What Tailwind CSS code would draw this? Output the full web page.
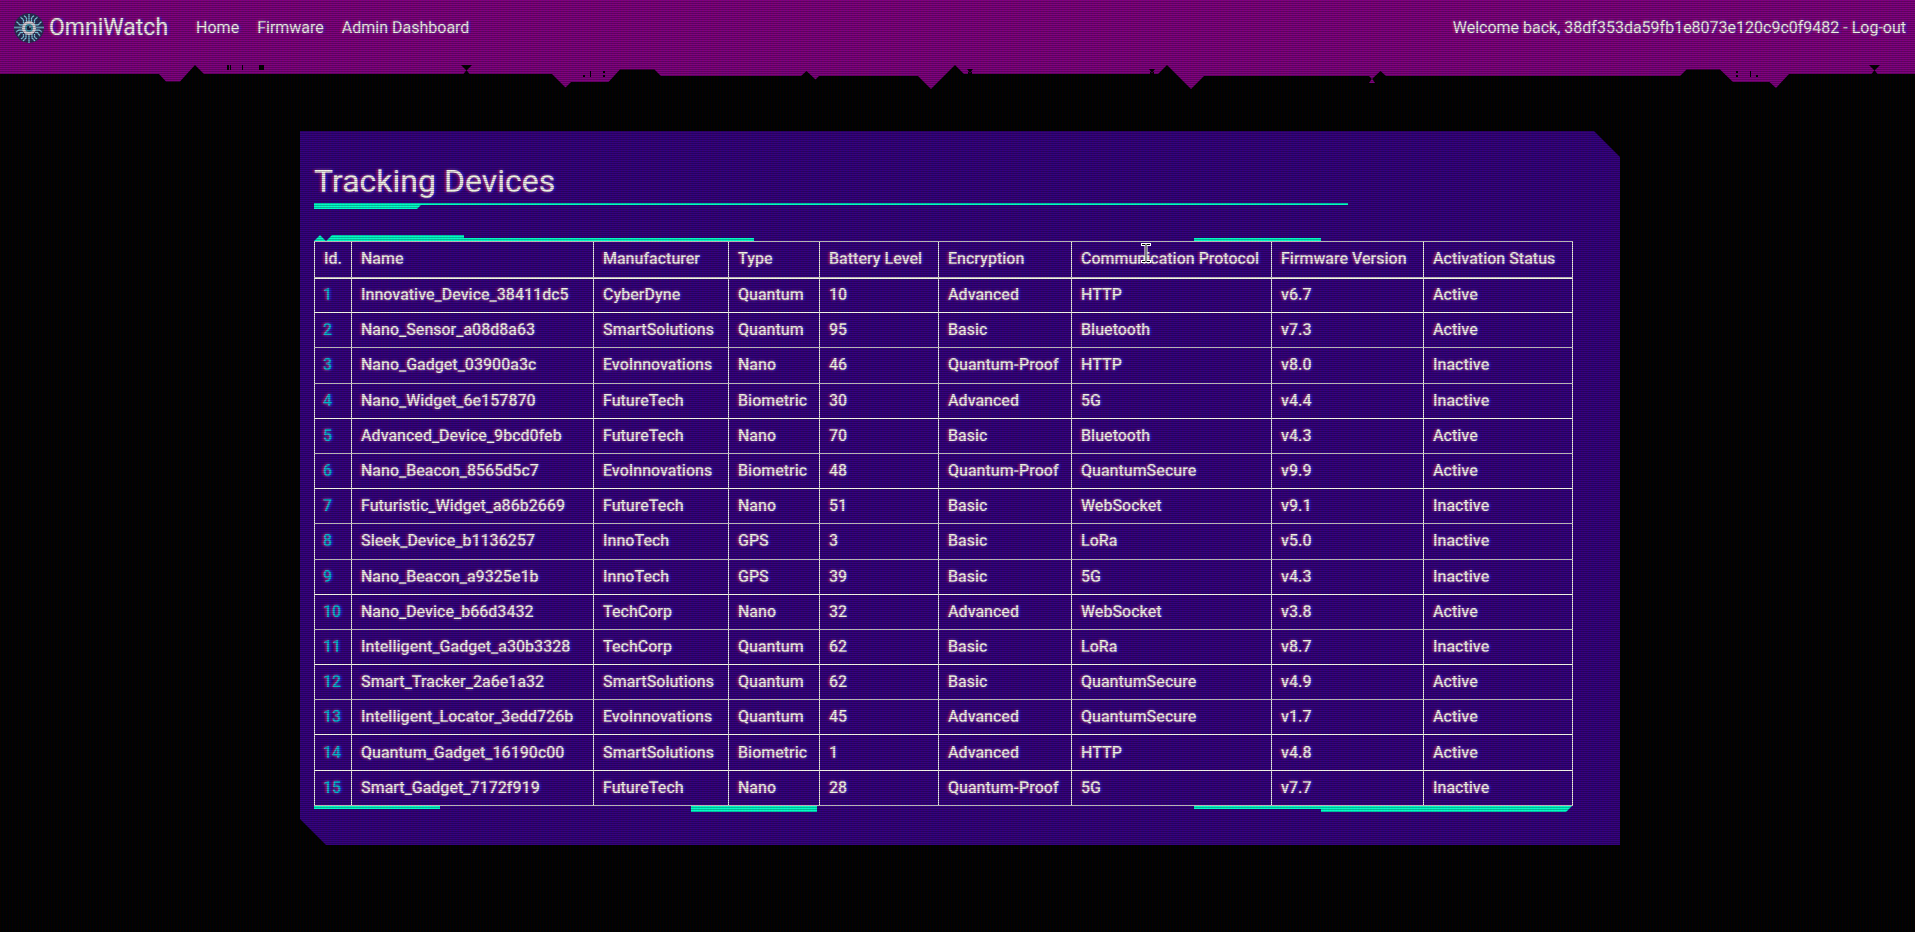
<!DOCTYPE html>
<html lang="en">
<head>
<meta charset="utf-8">
<meta name="viewport" content="width=device-width, initial-scale=1">
<title>OmniWatch</title>
<script src="https://cdn.jsdelivr.net/npm/@tailwindcss/browser@4"></script>
</head>
<body class="min-h-screen bg-black font-['Roboto','Liberation_Sans',sans-serif] text-base text-[#f8f8f0] [text-shadow:-2px_0_2px_rgba(255,0,60,0.45),2px_0_2px_rgba(0,30,255,0.6),0_0_3px_rgba(255,255,255,0.5)]">
<header>
  <nav class="flex h-14 items-center bg-[#800080] pl-3.5 pr-[9px]" aria-label="Main">
    <a href="#" class="flex items-center gap-[5px] text-[23px]">
      <svg class="size-[30px]" viewBox="0 0 30 30" fill="none" aria-hidden="true">
        <circle cx="15" cy="15" r="15" fill="#2b2c57"/>
        <g stroke="#7fc4dc" stroke-width="1.3">
          <path d="M15 9V1M12.5 10V5L10 2.5M17.500 10V5L20 2.500M9.500 10.500V7L6.500 4M20.500 10.500V7L23.500 4M9 12H6L2.500 8.500M21 12h3l3.500-3.500M8 14.500H0M22 14.500h8M9 17H5l-3 2M21 17h4l3 2M9 19.500H6.500L4 23M21 19.500h2.500L26 23M12 21v4l-3 3M18 21v4l3 3M15 21v9M9.500 21v3L7 26M20.500 21v3l2.500 2"/>
        </g>
        <circle cx="15" cy="15" r="7" fill="#d9d3dd"/>
        <circle cx="15" cy="15" r="4" fill="#3f92aa"/>
        <circle cx="15" cy="15" r="2.300" fill="#1c2140"/>
        <circle cx="16" cy="14" r="0.800" fill="#d9f4ff"/>
      </svg>
      <span>OmniWatch</span>
    </a>
    <ul class="ml-7 flex items-center gap-[18px]">
      <li><a href="#">Home</a></li>
      <li><a href="#">Firmware</a></li>
      <li><a href="#">Admin Dashboard</a></li>
    </ul>
    <p class="ml-auto">Welcome back, 38df353da59fb1e8073e120c9c0f9482 - <a href="#">Log-out</a></p>
  </nav>
  <svg class="block h-9 w-full" viewBox="0 56 1915 36" preserveAspectRatio="none" aria-hidden="true">
    <path fill="#800080" d="M0 56V74H159L166 81.500H180L195 65L204 74H552L565.500 87.500L571 82H608.500L620 69.500H654.500L661 76H801L806.500 71L815.500 79.500L819 76H918L931 89L955 65L964 74H1158L1167 65L1191 89L1204 76H1369L1372 79L1380.500 71L1386 76H1680L1686.500 69.500H1720L1733 82H1769.500L1776 88L1789 74H1915V56Z"/>
    <path fill="#800080" d="M1369 83H1375L1372 78.500Z"/>
    <path fill="#000" d="M461 65H472L466.500 70.500ZM463.500 74H469.500L466.500 70ZM967 69H973L970 73ZM968 74H972V72H968ZM1149 69H1155L1152 73ZM1150 74H1154V72H1150ZM1869 65H1880L1874.500 70.500ZM1871.500 74H1877.500L1874.500 70ZM227 65h2v5h-2ZM230 65h1v5h-1ZM242 65h1v5h-1ZM259 65h5v5h-5ZM583 75h2v2h-2ZM590 71h1v6h-1ZM603 71h2v2h-2ZM603 75h2v2h-2ZM1736 71h2v2h-2ZM1736 75h2v2h-2ZM1750 71h1v6h-1ZM1756 75h2v2h-2Z"/>
  </svg>
</header>

<main class="pb-10 pl-[5px] pt-[39px]">
  <section class="mx-auto max-w-[1320px] bg-[#350080] pb-[33px] pl-3.5 pr-12 pt-[30px] [clip-path:polygon(0_0,calc(100%-26px)_0,100%_26px,100%_100%,26px_100%,0_calc(100%-26px))]">
    <h1 class="pb-0.5 text-[32px] leading-10">Tracking Devices</h1>
    <div class="h-1.5 w-[1034px] max-w-full" aria-hidden="true">
      <div class="h-0.5 bg-[#00ffcc]"></div>
      <div class="h-1 w-[107px] bg-[#00ffcc] [clip-path:polygon(0_0,100%_0,calc(100%-4px)_100%,0_100%)]"></div>
    </div>
    <svg class="mt-[26px] block h-1.5 w-full" viewBox="0 0 1258 6" preserveAspectRatio="none" aria-hidden="true">
      <path fill="#00ffcc" d="M0 6L6 0L12 6L18 0H150V3H440V6ZM880 3H1007V6H880Z"/>
    </svg>
    <table class="h-[565px] w-full table-fixed border-collapse text-left font-medium [&_td]:border [&_td]:border-[#f8f8f0] [&_td]:pl-[9px] [&_th]:border [&_th]:border-[#f8f8f0] [&_th]:pl-[9px] [&_th]:font-medium [&_tbody_th]:pl-2 [&_tbody_th]:text-[#00b8d4] [&_tbody_tr]:h-[35px]">
      <colgroup>
        <col class="w-[37px]"><col class="w-[242px]"><col class="w-[135px]"><col class="w-[91px]"><col class="w-[119px]"><col class="w-[133px]"><col class="w-[200px]"><col class="w-[152px]"><col class="w-[149px]">
      </colgroup>
      <thead class="border-b-2 border-[#f8f8f0]">
        <tr class="h-9"><th scope="col">Id.</th><th scope="col">Name</th><th scope="col">Manufacturer</th><th scope="col">Type</th><th scope="col">Battery Level</th><th scope="col">Encryption</th><th scope="col">Communication Protocol</th><th scope="col">Firmware Version</th><th scope="col">Activation Status</th></tr>
      </thead>
      <tbody>
        <tr><th scope="row">1</th><td>Innovative_Device_38411dc5</td><td>CyberDyne</td><td>Quantum</td><td>10</td><td>Advanced</td><td>HTTP</td><td>v6.7</td><td>Active</td></tr>
        <tr><th scope="row">2</th><td>Nano_Sensor_a08d8a63</td><td>SmartSolutions</td><td>Quantum</td><td>95</td><td>Basic</td><td>Bluetooth</td><td>v7.3</td><td>Active</td></tr>
        <tr><th scope="row">3</th><td>Nano_Gadget_03900a3c</td><td>EvoInnovations</td><td>Nano</td><td>46</td><td>Quantum-Proof</td><td>HTTP</td><td>v8.0</td><td>Inactive</td></tr>
        <tr><th scope="row">4</th><td>Nano_Widget_6e157870</td><td>FutureTech</td><td>Biometric</td><td>30</td><td>Advanced</td><td>5G</td><td>v4.4</td><td>Inactive</td></tr>
        <tr><th scope="row">5</th><td>Advanced_Device_9bcd0feb</td><td>FutureTech</td><td>Nano</td><td>70</td><td>Basic</td><td>Bluetooth</td><td>v4.3</td><td>Active</td></tr>
        <tr><th scope="row">6</th><td>Nano_Beacon_8565d5c7</td><td>EvoInnovations</td><td>Biometric</td><td>48</td><td>Quantum-Proof</td><td>QuantumSecure</td><td>v9.9</td><td>Active</td></tr>
        <tr><th scope="row">7</th><td>Futuristic_Widget_a86b2669</td><td>FutureTech</td><td>Nano</td><td>51</td><td>Basic</td><td>WebSocket</td><td>v9.1</td><td>Inactive</td></tr>
        <tr><th scope="row">8</th><td>Sleek_Device_b1136257</td><td>InnoTech</td><td>GPS</td><td>3</td><td>Basic</td><td>LoRa</td><td>v5.0</td><td>Inactive</td></tr>
        <tr><th scope="row">9</th><td>Nano_Beacon_a9325e1b</td><td>InnoTech</td><td>GPS</td><td>39</td><td>Basic</td><td>5G</td><td>v4.3</td><td>Inactive</td></tr>
        <tr><th scope="row">10</th><td>Nano_Device_b66d3432</td><td>TechCorp</td><td>Nano</td><td>32</td><td>Advanced</td><td>WebSocket</td><td>v3.8</td><td>Active</td></tr>
        <tr><th scope="row">11</th><td>Intelligent_Gadget_a30b3328</td><td>TechCorp</td><td>Quantum</td><td>62</td><td>Basic</td><td>LoRa</td><td>v8.7</td><td>Inactive</td></tr>
        <tr><th scope="row">12</th><td>Smart_Tracker_2a6e1a32</td><td>SmartSolutions</td><td>Quantum</td><td>62</td><td>Basic</td><td>QuantumSecure</td><td>v4.9</td><td>Active</td></tr>
        <tr><th scope="row">13</th><td>Intelligent_Locator_3edd726b</td><td>EvoInnovations</td><td>Quantum</td><td>45</td><td>Advanced</td><td>QuantumSecure</td><td>v1.7</td><td>Active</td></tr>
        <tr><th scope="row">14</th><td>Quantum_Gadget_16190c00</td><td>SmartSolutions</td><td>Biometric</td><td>1</td><td>Advanced</td><td>HTTP</td><td>v4.8</td><td>Active</td></tr>
        <tr><th scope="row">15</th><td>Smart_Gadget_7172f919</td><td>FutureTech</td><td>Nano</td><td>28</td><td>Quantum-Proof</td><td>5G</td><td>v7.7</td><td>Inactive</td></tr>
      </tbody>
    </table>
    <svg class="block h-1.5 w-full" viewBox="0 0 1258 6" preserveAspectRatio="none" aria-hidden="true">
      <path fill="#00ffcc" d="M0 0H126V3H0ZM377 0H503V6H377ZM880 0H1258L1252 6H1007V3H880Z"/>
    </svg>
  </section>
</main>

<!-- CRT scanlines -->
<div class="pointer-events-none fixed inset-0 z-10 bg-[linear-gradient(rgba(18,16,16,0)_50%,rgba(0,0,0,0.25)_50%),linear-gradient(90deg,rgba(255,0,0,0.06),rgba(0,255,0,0.02),rgba(0,0,255,0.06))] bg-[length:100%_2px,3px_100%]" aria-hidden="true"></div>
<!-- text pointer -->
<svg class="pointer-events-none fixed left-[1141px] top-[243px] z-20 h-[20px] w-[10px]" viewBox="0 0 10 20" fill="none" aria-hidden="true">
  <path stroke="#fff" stroke-width="3" d="M0 1.500H10M0 18.500H10M5 1V19"/>
  <path stroke="#000" d="M1 1.500H4.500M5.500 1.500H9M1 18.500H4.500M5.500 18.500H9M5 2V18"/>
</svg>
</body>
</html>
